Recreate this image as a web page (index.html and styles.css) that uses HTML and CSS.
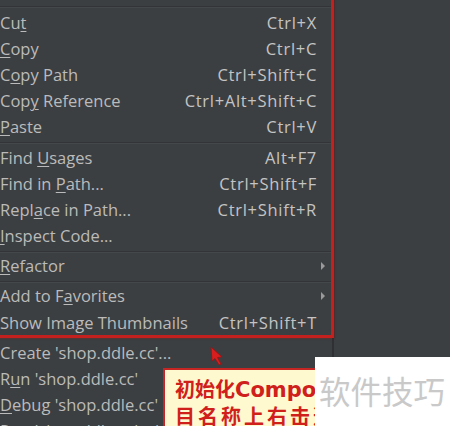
FILE: index.html
```html
<!DOCTYPE html>
<html>
<head>
<meta charset="utf-8">
<link rel="stylesheet" href="styles.css">
</head>
<body>
<div class="screen">
  <div class="menu">
    <div class="top"></div>
    <div class="sep first"></div>
    <div class="row"><span class="label">Cu<u>t</u></span><span class="key">Ctrl+X</span></div>
    <div class="row"><span class="label"><u>C</u>opy</span><span class="key">Ctrl+C</span></div>
    <div class="row"><span class="label">C<u>o</u>py Path</span><span class="key">Ctrl+Shift+C</span></div>
    <div class="row"><span class="label">Cop<u>y</u> Reference</span><span class="key">Ctrl+Alt+Shift+C</span></div>
    <div class="row"><span class="label"><u>P</u>aste</span><span class="key">Ctrl+V</span></div>
    <div class="sep"></div>
    <div class="row"><span class="label">Find <u>U</u>sages</span><span class="key">Alt+F7</span></div>
    <div class="row"><span class="label">Find in <u>P</u>ath...</span><span class="key">Ctrl+Shift+F</span></div>
    <div class="row"><span class="label">Repl<u>a</u>ce in Path...</span><span class="key">Ctrl+Shift+R</span></div>
    <div class="row"><span class="label"><u>I</u>nspect Code...</span></div>
    <div class="sep"></div>
    <div class="row"><span class="label"><u>R</u>efactor</span><span class="arrow"></span></div>
    <div class="sep"></div>
    <div class="row"><span class="label">Add to F<u>a</u>vorites</span><span class="arrow"></span></div>
    <div class="row"><span class="label">Show Image Thumbnails</span><span class="key">Ctrl+Shift+T</span></div>
    <div class="sep"></div>
    <div class="row"><span class="label">Create 'shop.ddle.cc'...</span></div>
    <div class="row"><span class="label">R<u>u</u>n 'shop.ddle.cc'</span></div>
    <div class="row"><span class="label"><u>D</u>ebug 'shop.ddle.cc'</span></div>
    <div class="row"><span class="label">Run 'shop.ddle.cc' with Coverage</span></div>
  </div>
  <div class="side"></div>

  <div class="highlight"></div>
  <svg class="cursor" width="14" height="22" viewBox="0 0 14 22">
    <polygon points="1,1 2,15 5,12.5 9,19 11,18 7.5,11.5 12,11" fill="#d81e1e" stroke="#a01010" stroke-width="0.8"/>
  </svg>
  <div class="tip">
    <div class="tip-line">初始化<b>Composer</b>项</div>
    <div class="tip-line wide">目名称上右击选择</div>
  </div>
  <div class="mark">软件技巧</div>
</div>
</body>
</html>
```
FILE: styles.css
```css
html, body {
  margin: 0;
  padding: 0;
  background: #3c3f41;
}
.screen {
  position: relative;
  width: 450px;
  height: 426px;
  overflow: hidden;
  display: flex;
  font-family: "Open Sans", "Noto Sans", sans-serif;
}
.menu {
  width: 332px;
  flex: none;
  border-right: 2px solid #2e3033;
  background: #3c3f41;
  color: #bbbbbb;
  font-size: 16.5px;
}
.side {
  flex: 1;
  background: #3c3f41;
}
.top {
  height: 6px;
}
.sep {
  height: 1px;
  background: #323437;
  margin: 2px 0 1px;
  box-shadow: 0 1px 0 #45484a;
}
.sep.first {
  margin: 0 0 2px;
}
.row {
  height: 26.2px;
  display: flex;
  align-items: center;
  padding-right: 7px;
  white-space: nowrap;
}
.label {
  flex: 1;
}
.label u {
  text-decoration-thickness: 1px;
  text-underline-offset: 2px;
}
.key {
  margin-right: 8px;
  color: #c4c4c4;
  letter-spacing: 0.7px;
}
.arrow {
  width: 0;
  height: 0;
  border-top: 4px solid transparent;
  border-bottom: 4px solid transparent;
  border-left: 4px solid #9a9a9a;
}
.highlight {
  position: absolute;
  left: -10px;
  top: -10px;
  width: 338px;
  height: 342px;
  border: 3px solid #c4201d;
  box-shadow: 0 0 2px rgba(120, 0, 0, 0.8);
}
.cursor {
  position: absolute;
  left: 210px;
  top: 346px;
}
.tip {
  position: absolute;
  left: 163px;
  top: 368px;
  width: 320px;
  height: 80px;
  background: #fff9cf;
  border: 2px solid #c62623;
  box-sizing: border-box;
  padding: 6px 0 0 10px;
  color: #d0201c;
  font-family: "Noto Sans CJK SC", sans-serif;
  font-size: 20px;
  line-height: 25px;
  font-weight: 700;
  white-space: nowrap;
}
.tip b {
  font-family: "DejaVu Sans", "Noto Sans CJK SC", sans-serif;
  font-weight: bold;
  font-size: 21px;
}
.tip-line.wide {
  letter-spacing: 3px;
}
.mark {
  position: absolute;
  left: 315px;
  top: 357px;
  width: 135px;
  height: 69px;
  background: #ffffff;
  color: #c9c9c9;
  font-family: "Noto Sans CJK SC", sans-serif;
  font-size: 31.5px;
  line-height: 66px;
  padding-left: 4px;
  box-sizing: border-box;
  white-space: nowrap;
}
```
